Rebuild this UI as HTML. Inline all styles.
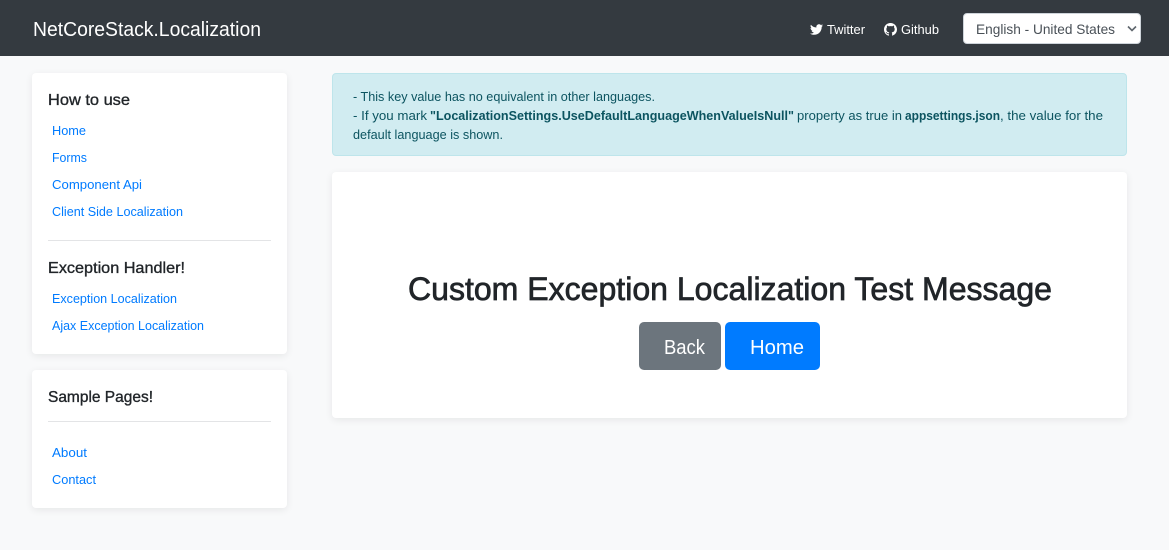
<!DOCTYPE html>
<html lang="en">
<head>
<meta charset="utf-8">
<title>NetCoreStack.Localization</title>
<style>
html,body{margin:0;padding:0;width:1169px;height:550px;overflow:hidden;background:#f8f9fa;}
.a{position:absolute;box-sizing:border-box;}
.nav{left:0;top:0;width:1169px;height:56px;background:#343a40;}
.card{background:#fff;border-radius:4px;box-shadow:0 2px 8px rgba(0,0,0,.075);}
.hr{height:1px;background:#e3e4e6;}
svg.t{position:absolute;left:0;top:0;}
text{font-family:"Liberation Sans",sans-serif;}
.l{font-size:13px;fill:#007bff;}
.h{font-size:16px;fill:#212529;stroke:#212529;stroke-width:.35px;}
.m{font-size:13px;fill:#0c5460;}
.b{font-size:13px;fill:#0c5460;font-weight:bold;}
</style>
</head>
<body>
<div class="a nav"></div>
<div class="a" style="left:963px;top:13px;width:178px;height:31px;background:#fff;border:1px solid #ced4da;border-radius:4px;"></div>
<div class="a card" style="left:32px;top:73px;width:255px;height:281px;"></div>
<div class="a hr" style="left:48px;top:240px;width:223px;"></div>
<div class="a card" style="left:32px;top:370px;width:255px;height:138px;"></div>
<div class="a hr" style="left:48px;top:421px;width:223px;"></div>
<div class="a" style="left:332px;top:73px;width:795px;height:83px;background:#d1ecf1;border:1px solid #bee5eb;border-radius:4px;"></div>
<div class="a card" style="left:332px;top:172px;width:795px;height:246px;"></div>
<div class="a" style="left:639px;top:322px;width:82px;height:48px;background:#6c757d;border-radius:5px;"></div>
<div class="a" style="left:725px;top:322px;width:95px;height:48px;background:#007bff;border-radius:5px;"></div>

<svg class="t" width="1169" height="550" viewBox="0 0 1169 550" xmlns="http://www.w3.org/2000/svg">
<text x="33" y="36" font-size="20" fill="#fff" textLength="228" lengthAdjust="spacingAndGlyphs">NetCoreStack.Localization</text>

<svg x="810" y="23" width="13" height="13" viewBox="0 0 512 512"><path fill="#fff" d="M459.37 151.716c.325 4.548.325 9.097.325 13.645 0 138.72-105.583 298.558-298.558 298.558-59.452 0-114.68-17.219-161.137-47.106 8.447.974 16.568 1.299 25.34 1.299 49.055 0 94.213-16.568 130.274-44.832-46.132-.975-84.792-31.188-98.112-72.772 6.498.974 12.995 1.624 19.818 1.624 9.421 0 18.843-1.3 27.614-3.573-48.081-9.747-84.143-51.98-84.143-102.985v-1.299c13.969 7.797 30.214 12.67 47.431 13.319-28.264-18.843-46.781-51.005-46.781-87.391 0-19.492 5.197-37.36 14.294-52.954 51.655 63.675 129.3 105.258 216.365 109.807-1.624-7.797-2.599-15.918-2.599-24.04 0-57.828 46.782-104.934 104.934-104.934 30.213 0 57.502 12.67 76.67 33.137 23.715-4.548 46.456-13.32 66.599-25.34-7.798 24.366-24.366 44.833-46.132 57.827 21.117-2.273 41.584-8.122 60.426-16.243-14.292 20.791-32.161 39.308-52.628 54.253z"/></svg>
<text x="827" y="34" font-size="13" fill="#fff" textLength="38" lengthAdjust="spacingAndGlyphs">Twitter</text>
<svg x="884" y="23" width="13" height="13" viewBox="0 0 16 16"><path fill="#fff" d="M8 0C3.58 0 0 3.58 0 8c0 3.54 2.29 6.53 5.47 7.59.4.07.55-.17.55-.38 0-.19-.01-.82-.01-1.49-2.01.37-2.53-.49-2.69-.94-.09-.23-.48-.94-.82-1.13-.28-.15-.68-.52-.01-.53.63-.01 1.08.58 1.23.82.72 1.21 1.87.87 2.33.66.07-.52.28-.87.51-1.07-1.78-.2-3.64-.89-3.64-3.95 0-.87.31-1.59.82-2.15-.08-.2-.36-1.02.08-2.12 0 0 .67-.21 2.2.82.64-.18 1.32-.27 2-.27.68 0 1.36.09 2 .27 1.53-1.04 2.2-.82 2.2-.82.44 1.1.16 1.92.08 2.12.51.56.82 1.27.82 2.15 0 3.07-1.87 3.75-3.65 3.95.29.25.54.73.54 1.48 0 1.07-.01 1.93-.01 2.2 0 .21.15.46.55.38A8.013 8.013 0 0016 8c0-4.42-3.58-8-8-8z"/></svg>
<text x="901" y="34" font-size="13" fill="#fff" textLength="38" lengthAdjust="spacingAndGlyphs">Github</text>
<text x="976" y="34" font-size="14" fill="#495057" textLength="139" lengthAdjust="spacingAndGlyphs">English - United States</text>
<path d="M1128 26.5l4 4 4-4" fill="none" stroke="#5f666d" stroke-width="1.6"/>

<text class="h" x="48" y="105" textLength="82" lengthAdjust="spacingAndGlyphs">How to use</text>
<text class="l" x="52" y="135" textLength="34" lengthAdjust="spacingAndGlyphs">Home</text>
<text class="l" x="52" y="162" textLength="35" lengthAdjust="spacingAndGlyphs">Forms</text>
<text class="l" x="52" y="189" textLength="90" lengthAdjust="spacingAndGlyphs">Component Api</text>
<text class="l" x="52" y="216" textLength="131" lengthAdjust="spacingAndGlyphs">Client Side Localization</text>
<text class="h" x="48" y="273" textLength="137" lengthAdjust="spacingAndGlyphs">Exception Handler!</text>
<text class="l" x="52" y="303" textLength="125" lengthAdjust="spacingAndGlyphs">Exception Localization</text>
<text class="l" x="52" y="330" textLength="152" lengthAdjust="spacingAndGlyphs">Ajax Exception Localization</text>
<text class="h" x="48" y="402" textLength="105" lengthAdjust="spacingAndGlyphs">Sample Pages!</text>
<text class="l" x="52" y="457" textLength="35" lengthAdjust="spacingAndGlyphs">About</text>
<text class="l" x="52" y="484" textLength="44" lengthAdjust="spacingAndGlyphs">Contact</text>

<text class="m" x="353" y="101" textLength="302" lengthAdjust="spacingAndGlyphs">- This key value has no equivalent in other languages.</text>
<text class="m" x="353" y="120" textLength="74" lengthAdjust="spacingAndGlyphs">- If you mark</text>
<text class="b" x="430" y="120" textLength="364" lengthAdjust="spacingAndGlyphs">"LocalizationSettings.UseDefaultLanguageWhenValueIsNull"</text>
<text class="m" x="797" y="120" textLength="105" lengthAdjust="spacingAndGlyphs">property as true in</text>
<text class="b" x="905" y="120" textLength="95" lengthAdjust="spacingAndGlyphs">appsettings.json</text>
<text class="m" x="1000" y="120" textLength="103" lengthAdjust="spacingAndGlyphs">, the value for the</text>
<text class="m" x="353" y="139" textLength="150" lengthAdjust="spacingAndGlyphs">default language is shown.</text>

<text x="408" y="300" font-size="32" fill="#212529" stroke="#212529" stroke-width=".7" textLength="644" lengthAdjust="spacingAndGlyphs">Custom Exception Localization Test Message</text>
<text x="664" y="354" font-size="20" fill="#fff" textLength="41" lengthAdjust="spacingAndGlyphs">Back</text>
<text x="750" y="354" font-size="20" fill="#fff" textLength="54" lengthAdjust="spacingAndGlyphs">Home</text>
</svg>
</body>
</html>
